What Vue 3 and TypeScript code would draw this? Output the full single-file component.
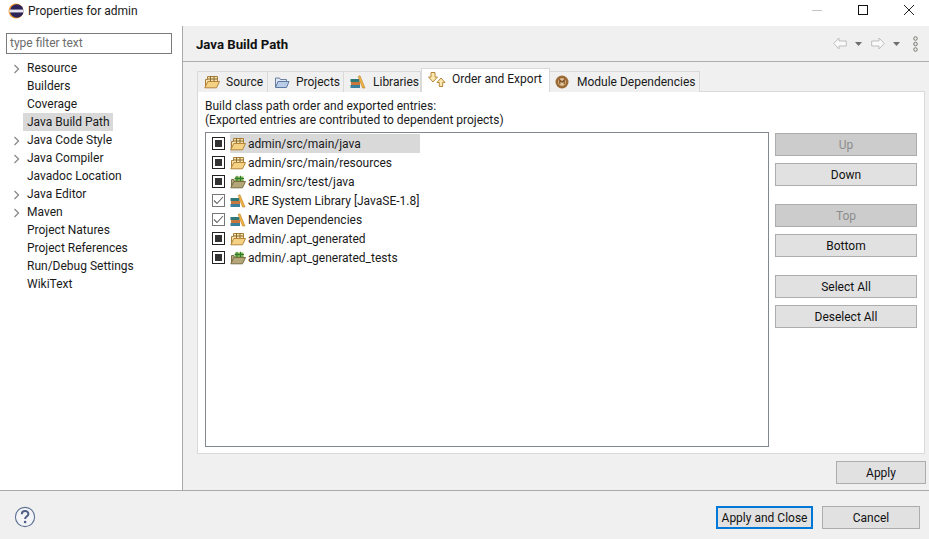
<script setup lang="ts">
const tree = [
  { label: 'Resource', arrow: true },
  { label: 'Builders' },
  { label: 'Coverage' },
  { label: 'Java Build Path', selected: true },
  { label: 'Java Code Style', arrow: true },
  { label: 'Java Compiler', arrow: true },
  { label: 'Javadoc Location' },
  { label: 'Java Editor', arrow: true },
  { label: 'Maven', arrow: true },
  { label: 'Project Natures' },
  { label: 'Project References' },
  { label: 'Run/Debug Settings' },
  { label: 'WikiText' },
]
const entries = [
  { label: 'admin/src/main/java', icon: 'src', checked: false, selected: true },
  { label: 'admin/src/main/resources', icon: 'src', checked: false },
  { label: 'admin/src/test/java', icon: 'test', checked: false },
  { label: 'JRE System Library [JavaSE-1.8]', icon: 'lib', checked: true },
  { label: 'Maven Dependencies', icon: 'lib', checked: true },
  { label: 'admin/.apt_generated', icon: 'src', checked: false },
  { label: 'admin/.apt_generated_tests', icon: 'test', checked: false },
]
const groups = [
  [{ label: 'Up', disabled: true }, { label: 'Down' }],
  [{ label: 'Top', disabled: true }, { label: 'Bottom' }],
  [{ label: 'Select All' }, { label: 'Deselect All' }],
]
</script>

<template>
  <div class="dialog">
    <header class="titlebar">
      <svg class="logo" width="16" height="16" viewBox="0 0 16 16">
        <circle cx="8" cy="8" r="7.500" fill="#f29a2e" />
        <circle cx="8.800" cy="8" r="6.800" fill="#2c2458" />
        <rect x="1.500" y="6.500" width="14" height="3" fill="#cfcde0" />
        <rect x="1.500" y="7.500" width="14" height="1" fill="#fff" />
      </svg>
      <span class="title">Properties for admin</span>
      <div class="wincontrols">
        <svg width="46" height="26" viewBox="0 0 46 26"><path d="M18 10.5h10" stroke="#c4c4c4" /></svg>
        <svg width="46" height="26" viewBox="0 0 46 26"><rect x="18.500" y="5.500" width="9" height="9" fill="none" stroke="#111" /></svg>
        <svg width="46" height="26" viewBox="0 0 46 26"><path d="M18 5l10 10M28 5L18 15" stroke="#222" fill="none" /></svg>
      </div>
    </header>

    <div class="body">
      <aside class="sidebar">
        <div class="filter">type filter text</div>
        <ul class="tree">
          <li v-for="n in tree" :key="n.label" class="tree-row">
            <svg v-if="n.arrow" class="chev" width="8" height="10" viewBox="0 0 8 10">
              <path d="M1.500 1l4 4-4 4" fill="none" stroke="#8a8a8a" stroke-width="1.300" />
            </svg>
            <span class="tree-label" :class="{ sel: n.selected }">{{ n.label }}</span>
          </li>
        </ul>
      </aside>

      <main class="main">
        <div class="head">
          <span class="head-title">Java Build Path</span>
          <div class="tools">
            <svg width="14" height="13" viewBox="0 0 14 13"><path d="M.7 6.500L6 1v3h7.300v5H6v3z" fill="#fafafa" stroke="#bdbdbd" /></svg>
            <svg class="drop" width="7" height="4" viewBox="0 0 7 4"><path d="M0 0h7L3.500 4z" fill="#6e6e6e" /></svg>
            <svg class="fwd" width="14" height="13" viewBox="0 0 14 13"><path d="M13.300 6.500L8 1v3H.7v5H8v3z" fill="#fafafa" stroke="#bdbdbd" /></svg>
            <svg class="drop" width="7" height="4" viewBox="0 0 7 4"><path d="M0 0h7L3.500 4z" fill="#6e6e6e" /></svg>
            <svg class="more" width="5" height="16" viewBox="0 0 5 16">
              <g fill="#e6ebe0" stroke="#7c7c7c"><circle cx="2.500" cy="2.500" r="1.800" /><circle cx="2.500" cy="8" r="1.800" /><circle cx="2.500" cy="13.500" r="1.800" /></g>
            </svg>
          </div>
        </div>

        <div class="tabs">
          <div class="tab t-source">
            <svg class="ic" width="16" height="14" viewBox="0 0 16 14"><use href="#folder-src" /></svg>Source
          </div>
          <div class="tab t-projects">
            <svg class="ic" width="16" height="14" viewBox="0 0 16 14">
              <path d="M1.500 12V3h4l1 1.500h6V7" fill="#dce6f3" stroke="#6d7f9c" />
              <path d="M1.500 12.500L4 6.500h11l-2.500 6z" fill="#b9cde8" stroke="#5d78a3" />
            </svg>Projects
          </div>
          <div class="tab t-libs">
            <svg class="ic" width="16" height="14" viewBox="0 0 16 14"><use href="#books" /></svg>Libraries
          </div>
          <div class="tab active">
            <svg class="ic" width="18" height="16" viewBox="0 0 18 16">
              <path d="M3 1.500h4v4.500h2.500l-4.500 5-4.500-5H3z" fill="#fbe9b0" stroke="#b5873a" />
              <path d="M13 7l4 4.500h-2.300v4h-3.400v-4H9z" fill="#fbe9b0" stroke="#b5873a" />
            </svg>Order and Export
          </div>
          <div class="tab t-module">
            <svg class="ic" width="14" height="14" viewBox="0 0 14 14">
              <circle cx="7" cy="7" r="6.500" fill="#9c6a34" />
              <circle cx="7" cy="7" r="3.800" fill="#e3c79c" />
              <path d="M4.800 9.200V5L7 7.200 9.200 5v4.200" fill="none" stroke="#7a4d20" stroke-width="1.200" />
            </svg>Module Dependencies
          </div>
        </div>

        <section class="card">
          <p class="desc">Build class path order and exported entries:<br />(Exported entries are contributed to dependent projects)</p>
          <div class="split">
            <div class="list">
              <div v-for="e in entries" :key="e.label" class="entry">
                <span class="check">
                  <span v-if="!e.checked" class="square"></span>
                  <svg v-else width="11" height="9" viewBox="0 0 11 9"><path d="M1 4.500l3 3 6-6.500" fill="none" stroke="#666" stroke-width="1.100" /></svg>
                </span>
                <span class="entry-body" :class="{ sel: e.selected }">
                  <svg width="16" height="14" viewBox="0 0 16 14" class="eicon">
                    <use :href="e.icon === 'src' ? '#folder-src' : e.icon === 'test' ? '#folder-test' : '#books'" />
                  </svg>
                  <span>{{ e.label }}</span>
                </span>
              </div>
            </div>
            <div class="side-buttons">
              <div v-for="(g, i) in groups" :key="i" class="btn-group">
                <button v-for="b in g" :key="b.label" class="btn" :class="{ disabled: b.disabled }">{{ b.label }}</button>
              </div>
            </div>
          </div>
        </section>

        <div class="apply-row"><button class="btn apply">Apply</button></div>
      </main>
    </div>

    <footer class="footer">
      <svg width="22" height="22" viewBox="0 0 22 22">
        <circle cx="11" cy="11" r="9.600" fill="#f2f4f7" stroke="#5f7295" stroke-width="1.100" />
        <path d="M7.800 8.300c0-4.200 6.600-4.200 6.600-.3 0 2.600-3.300 2.500-3.300 5" fill="none" stroke="#4c5f85" stroke-width="2" />
        <circle cx="11.100" cy="16" r="1.300" fill="#4c5f85" />
      </svg>
      <div class="foot-btns">
        <button class="btn primary">Apply and Close</button>
        <button class="btn cancel">Cancel</button>
      </div>
    </footer>

    <svg width="0" height="0" class="defs">
      <symbol id="folder-src" viewBox="0 0 16 14">
        <path d="M1.500 12.500V4.500h2V1.500h10V6" fill="#f6e3ae" stroke="#a8803a" />
        <path d="M6.500 1v5M10 1v5M3.500 4h10" stroke="#8c6a2e" fill="none" />
        <path d="M.8 12.800L3.800 6.500h11.700l-3 6.300z" fill="#f5d184" stroke="#b5853a" />
      </symbol>
      <symbol id="folder-test" viewBox="0 0 16 14">
        <path d="M1.500 12.500V4.500h2.500V6h9.500" fill="#b7ad85" stroke="#7a7048" />
        <path d="M5 1.500h8.500V6H5z" fill="#7fb04f" />
        <path d="M7 .8v5.400M10.500 .8v5.400M4.500 3.500h9.500" stroke="#2e7a2e" fill="none" />
        <path d="M.8 12.800L3.800 6.500h11.700l-3 6.300z" fill="#b5a67a" stroke="#7a6d42" />
      </symbol>
      <symbol id="books" viewBox="0 0 16 14">
        <rect x=".5" y="4" width="9" height="3" fill="#2f7a78" />
        <rect x="1" y="7" width="9" height="3" fill="#c9773a" />
        <rect x=".5" y="10" width="9.500" height="3" fill="#3a7f9c" />
        <path d="M8.200 1.500L10 .8l5 12.200h-2.500z" fill="#f2b544" stroke="#b9802a" stroke-width=".6" />
      </symbol>
    </svg>
  </div>
</template>

<style scoped>
.dialog {
  width: 929px;
  height: 539px;
  display: flex;
  flex-direction: column;
  background: #f0f0f0;
  font: 12px/16px Roboto, "Noto Sans", sans-serif;
  color: #1a1a1a;
  overflow: hidden;
}
.defs { display: block; height: 0; }
.titlebar {
  height: 26px;
  flex: none;
  background: #fff;
  display: flex;
  align-items: center;
  padding-left: 8px;
}
.logo { margin-top: -5px; }
.title { margin-left: 4px; margin-top: -5px; }
.wincontrols { margin-left: auto; display: flex; margin-right: -3px; margin-top: -1px; }
.body { height: 464px; flex: none; display: flex; }
.sidebar {
  width: 183px;
  box-sizing: border-box;
  flex: none;
  background: #fff;
  border-right: 1px solid #a9a9a9;
  padding: 7px 10px 0 6px;
}
.filter {
  height: 21px;
  box-sizing: border-box;
  border: 1px solid #7a7a7a;
  padding: 1px 3px;
  color: #6d6d6d;
  line-height: 17px;
}
.tree { list-style: none; margin: 5px 0 0; padding: 0; }
.tree-row { height: 18px; position: relative; padding-left: 17px; line-height: 18px; }
.chev { position: absolute; left: 7px; top: 5px; }
.tree-label { display: inline-block; padding: 0 3px 0 4px; height: 18px; }
.tree-label.sel { background: #d9d9d9; }
.main { flex: 1; display: flex; flex-direction: column; min-width: 0; }
.head {
  height: 36px;
  box-sizing: border-box;
  flex: none;
  border-bottom: 1px solid #acacac;
  display: flex;
  align-items: center;
  padding: 0 11px 0 13px;
}
.head-title { font-weight: 700; color: #111; font-size: 13.200px; margin-top: 3px; }
.tools { margin-left: auto; display: flex; align-items: center; gap: 8px; }
.fwd { margin-left: 1px; }
.more { margin-left: 5px; }
.tabs {
  height: 24px;
  margin-top: 6px;
  margin-left: 14px;
  flex: none;
  display: flex;
  align-items: flex-end;
  position: relative;
  z-index: 1;
}
.tab {
  height: 21px;
  box-sizing: border-box;
  border: 1px solid #d9d9d9;
  border-bottom: none;
  border-left: none;
  display: flex;
  align-items: center;
  white-space: nowrap;
  padding: 0 0 1px 6px;
  background: #f0f0f0;
}
.tab .ic { margin-right: 6px; }
.t-source { width: 71px; border-left: 1px solid #d9d9d9; }
.t-projects { width: 76px; }
.t-libs { width: 77px; }
.t-libs .ic { margin-right: 7px; }
.t-module { width: 150px; padding-left: 5px; }
.t-module .ic { margin-right: 8px; }
.active {
  width: 129px;
  height: 24px;
  background: #fff;
  border: 1px solid #d9d9d9;
  border-bottom: none;
  padding: 0 0 3px 6px;
}
.card {
  margin: -1px 4px 0 14px;
  height: 363px;
  box-sizing: border-box;
  flex: none;
  background: #fff;
  border: 1px solid #d9d9d9;
  padding: 7px 7px 6px 7px;
  display: flex;
  flex-direction: column;
}
.desc { margin: 0; line-height: 14px; height: 33px; }
.split { flex: 1; display: flex; gap: 6px; min-height: 0; }
.list {
  width: 564px;
  box-sizing: border-box;
  border: 1px solid #828790;
  padding-top: 1px;
}
.entry { height: 19px; display: flex; align-items: center; }
.check {
  width: 13px;
  height: 13px;
  box-sizing: border-box;
  border: 1px solid #222;
  margin-left: 6px;
  margin-right: 5px;
  display: flex;
  align-items: center;
  justify-content: center;
  background: #fff;
  flex: none;
}
.entry:nth-child(4) .check, .entry:nth-child(5) .check { border-color: #777; }
.square { width: 7px; height: 7px; background: #333; }
.entry-body { display: flex; align-items: center; height: 19px; width: 190px; white-space: nowrap; }
.entry-body.sel { background: #d9d9d9; }
.eicon { margin-right: 2px; flex: none; }
.side-buttons { width: 142px; display: flex; flex-direction: column; gap: 18px; margin-top: 1px; }
.btn-group { display: flex; flex-direction: column; gap: 7px; }
.btn {
  height: 23px;
  box-sizing: border-box;
  border: 1px solid #adadad;
  background: #e1e1e1;
  font: inherit;
  color: #111;
  padding: 1px 0 0;
  line-height: 19px;
}
.btn.disabled { background: #cccccc; color: #8c8c8c; }
.apply-row { display: flex; justify-content: flex-end; padding: 7px 3px 0 0; }
.apply { width: 90px; }
.footer {
  height: 49px;
  flex: none;
  box-sizing: border-box;
  border-top: 1px solid #a9a9a9;
  display: flex;
  align-items: flex-start;
  padding: 15px 9px 0 14px;
}
.foot-btns { margin-left: auto; display: flex; gap: 9px; }
.primary { width: 97px; border: 2px solid #0078d7; line-height: 17px; }
.cancel { width: 98px; }
</style>
<style>
html, body { margin: 0; padding: 0; background: #f0f0f0; }
</style>
